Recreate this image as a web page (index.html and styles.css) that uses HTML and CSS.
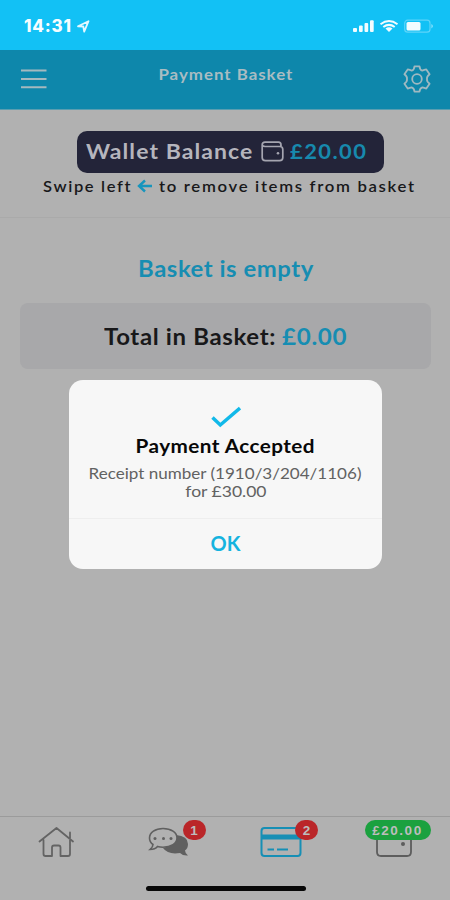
FILE: index.html
```html
<!DOCTYPE html>
<html lang="en">
<head>
<meta charset="utf-8">
<title>Payment Basket</title>
<link rel="stylesheet" href="styles.css">
</head>
<body>
<div class="app">
  <div class="status">
    <span class="time">14:31</span>
    <svg class="loc" width="13" height="13" viewBox="0 0 13 13"><path d="M1 6.3 11.5 1.2 7.2 11.6 6.3 6.5Z" fill="none" stroke="#e4f8ff" stroke-width="1.8" stroke-linejoin="round"/></svg>
    <svg class="signals" width="82" height="16" viewBox="0 0 82 16">
      <g fill="#f2fcff">
        <rect x="0" y="9" width="4" height="4" rx="1"/><rect x="6" y="6.5" width="3.7" height="6.5" rx="1"/><rect x="11.500" y="4" width="3.700" height="9" rx="1"/><rect x="17" y="1.200" width="3.700" height="11.800" rx="1"/>
        <path d="M32.500 9.500 Q36 7.200 39.500 9.500 L36 13Z"/>
        <rect x="53.500" y="3" width="14" height="8.500" rx="1.500"/>
      </g>
      <g fill="none" stroke="#f2fcff" stroke-width="2"><path d="M27.500 5.200Q36-1 44.500 5.200"/><path d="M30.300 8Q36 3.700 41.700 8"/></g>
      <rect x="51.700" y="1.200" width="25.300" height="12" rx="3" fill="none" stroke="#5dd4f9" stroke-width="1.200"/>
      <path d="M78.500 5Q81 7 78.500 9.500Z" fill="#a5e7fc"/>
    </svg>
  </div>
  <header class="header">
    <svg class="menu" width="26" height="22" viewBox="0 0 26 22"><path d="M0 2.500H25.500M0 11H25.500M0 19.200H25.500" stroke="#a5b9bf" stroke-width="2"/></svg>
    <h1><span class="fit title">Payment Basket</span></h1>
    <svg class="gear" width="30" height="30" viewBox="0 0 30 30" fill="none" stroke="#9fb9c1" stroke-width="1.800" stroke-linejoin="round"><path d="M12.500 2.300H17.500Q17.800 5.800 20.300 6.600Q22.200 6 24.300 5.400L27.600 10.200Q24.500 12.500 25 15Q24.500 17.500 27.600 19.800L24.300 24.600Q22.200 24 20.300 23.400Q17.800 24.200 17.500 27.700H12.500Q12.200 24.200 9.700 23.400Q7.800 24 5.700 24.600L2.400 19.800Q5.500 17.500 5 15Q5.500 12.500 2.400 10.200L5.700 5.400Q7.800 6 9.700 6.600Q12.200 5.800 12.500 2.300Z"/><circle cx="15" cy="15" r="4.800"/></svg>
  </header>
  <section class="wallet">
    <div class="pill">
      <span class="fit balance">Wallet Balance</span>
      <svg width="23" height="21" viewBox="0 0 23 21" fill="none" stroke="#a5a5b0" stroke-width="1.700"><path d="M1.200 4V16.500Q1.200 19.700 4.400 19.700H18.600Q21.800 19.700 21.800 16.500V8.500Q21.800 5.700 19 5.500H4Q1.200 5 1.200 3.700Q1.200 1.200 4 1.200H17.500Q20 1.200 20 4V5.500"/><circle cx="17" cy="12.300" r="1.300" fill="#a5a5b0" stroke="none"/></svg>
      <span class="fit amount">£20.00</span>
    </div>
    <p class="swipe"><span class="fit swipe-a">Swipe left</span><svg width="16" height="14" viewBox="0 0 16 14"><path d="M8 1.500 2 7 8 12.500M2 7H15" fill="none" stroke="#1795bd" stroke-width="2.400"/></svg><span class="fit swipe-b">to remove items from basket</span></p>
  </section>
  <main class="basket">
    <h2><span class="fit empty">Basket is empty</span></h2>
    <div class="total"><span class="fit total-label">Total in Basket:</span><span class="fit total-value">£0.00</span></div>
  </main>
  <nav class="tabs">
    <div class="tab"><svg width="38" height="34" viewBox="0 0 38 34" fill="none" stroke="#646464" stroke-width="1.800" stroke-linejoin="round" stroke-linecap="round"><path d="M2.500 16.500 19.500 3 36 16.500M33 13V7.500M6.500 15V29Q6.500 31 8.500 31H15V22.500Q15 20.500 17 20.500H21.500Q23.500 20.500 23.500 22.500V31H31Q33 31 33 29V15"/></svg></div>
    <div class="tab"><svg width="42" height="34" viewBox="0 0 42 34"><path d="M28 10Q40 11 40 19Q40 23.500 37 25.500Q37 28 40 30.500Q35 31 32 28Q20 30 15 23Q27 21 28 10Z" fill="#606060"/><path d="M15 3.500C7.500 3.500 1.500 7.500 1.500 13Q1.500 17 5 19.500Q5 22 2 24.500Q7 24.500 9.500 21.500Q12 22.200 15 22.200C23 22.200 29 18.500 29 13S23 3.500 15 3.500Z" fill="#b1b1b1" stroke="#606060" stroke-width="1.600"/><g fill="#606060"><circle cx="7" cy="13.500" r="1.500"/><circle cx="15.500" cy="13.500" r="1.500"/><circle cx="23" cy="13.500" r="1.500"/></g></svg><span class="badge red">1</span></div>
    <div class="tab"><svg width="42" height="34" viewBox="0 0 42 34"><rect x="1.500" y="3" width="39" height="28" rx="3" fill="none" stroke="#168fb5" stroke-width="2"/><path d="M1.500 12H40.500" stroke="#168fb5" stroke-width="5"/><path d="M7.500 24.500H14M17 24.500H28" stroke="#168fb5" stroke-width="2"/></svg><span class="badge red">2</span></div>
    <div class="tab"><svg width="38" height="34" viewBox="0 0 38 34"><path d="M2 6V27Q2 31 6 31H32Q36 31 36 27V6" fill="none" stroke="#5d5d5d" stroke-width="1.800"/><circle cx="28" cy="19" r="2" fill="#5d5d5d"/></svg><span class="badge green">£20.00</span></div>
  </nav>
  <div class="home-area"><div class="home-bar"></div></div>
  <div class="dialog">
    <div class="message">
      <svg width="30" height="22" viewBox="0 0 30 22"><path d="M1.500 11.500 9.300 19 29 2" fill="none" stroke="#12b9e9" stroke-width="3.500"/></svg>
      <h3><span class="fit accepted">Payment Accepted</span></h3>
      <p><span class="fit receipt">Receipt number (1910/3/204/1106)</span></p>
      <p><span class="fit price">for £30.00</span></p>
    </div>
    <div class="ok">OK</div>
  </div>
</div>
</body>
</html>
```
FILE: styles.css
```css
* { box-sizing: border-box; }
body { margin: 0; background: #b1b1b1; font-family: Lato, "Open Sans", sans-serif; color: #18181a; }
h1, h2, h3, p { margin: 0; font: inherit; }
svg { display: block; flex: none; }
.fit { display: inline-block; white-space: nowrap; }
.app { position: relative; width: 450px; height: 900px; display: flex; flex-direction: column; overflow: hidden; }
.status { height: 50px; flex: none; background: #12c1f5; display: flex; align-items: flex-start; padding: 16px 15px 0 24px; }
.time { font: 800 17px/20px Inter, sans-serif; color: #f5fdff; width: 49px; letter-spacing: .8px; }
.loc { margin: 4px 0 0 4px; }
.signals { margin: 3px 0 0 auto; }
.header { height: 60px; flex: none; background: #0e87ab; border-bottom: 1px solid #599eb1; display: flex; align-items: flex-start; justify-content: space-between; padding: 14px 18px 0 21px; }
.menu { margin-top: 4px; }
.header h1 { line-height: 20px; font-size: 15.500px; font-weight: 700; color: #a9bcc2; letter-spacing: .9px; }
.title { transform: translateX(1px) scaleX(1.09); }
.wallet { height: 108px; flex: none; border-bottom: 1px solid #aaa; display: flex; flex-direction: column; align-items: center; padding: 21px 0 0 10px; }
.pill { width: 307px; height: 42px; background: #232439; border-radius: 10px; display: flex; align-items: center; padding: 0 9px 2px; gap: 7px; color: #b5b5bd; font-size: 21.500px; font-weight: 700; }
.pill .fit { margin-top: -1px; }
.balance { letter-spacing: 1px; width: 168px; transform: scaleX(1.07); transform-origin: left; }
.amount { color: #1789ad; letter-spacing: 1.4px; margin-left: -1px; transform: scaleX(1.02); transform-origin: left; }
.swipe { display: flex; align-items: center; height: 26px; font-size: 15.500px; font-weight: 600; letter-spacing: 1.55px; }
.swipe-a { width: 94px; transform: scaleX(1.065); transform-origin: left; }
.swipe-b { width: 258px; margin-left: 6px; transform: scaleX(1.08); transform-origin: left; }
.basket { flex: 1; padding: 39px 19px 0 20px; }
.basket h2 { height: 46px; line-height: 24px; text-align: center; color: #168db2; font-size: 22px; font-weight: 700; letter-spacing: .5px; }
.empty { transform: scaleX(1.085); }
.total { height: 66px; border-radius: 8px; background: #a8a8aa; display: flex; align-items: center; justify-content: center; gap: 7px; font-size: 22px; font-weight: 700; letter-spacing: .6px; }
.total-label { width: 171px; transform: scaleX(1.09); transform-origin: left; }
.total-value { width: 65px; color: #168db2; transform: scaleX(1.1); transform-origin: left; }
.tabs { height: 58px; flex: none; border-top: 1px solid #9b9b9b; display: grid; grid-template-columns: repeat(4, 112.5px); padding-top: 8px; }
.tab { position: relative; display: flex; justify-content: center; }
.badge { position: absolute; left: 70px; top: -5px; height: 20px; border-radius: 10px; font: 700 13.500px/22px "Liberation Sans", sans-serif; text-align: center; color: #bdbdbd; width: 23px; background: #ba2629; }
.green { left: 27px; width: 66px; background: #1ba13f; letter-spacing: 1.5px; }
.home-area { height: 26px; flex: none; padding: 12px 0 0 146px; }
.home-bar { width: 160px; height: 5px; border-radius: 3px; background: #080808; }
.dialog { position: absolute; left: 69px; top: 380px; width: 313px; height: 189px; border-radius: 14px; background: #f7f7f7; text-align: center; }
.message { height: 139px; padding-top: 26px; border-bottom: 1px solid #eee; display: flex; flex-direction: column; align-items: center; }
.message h3 { font-size: 19px; line-height: 24px; margin: 6px 0 6px; font-weight: 700; color: #080808; letter-spacing: .4px; }
.accepted { transform: scaleX(1.09); }
.message p { font-size: 15.500px; line-height: 18px; color: #626262; }
.receipt { transform: scaleX(1.1); }
.price { transform: scaleX(1.13); }
.ok { font-size: 20px; line-height: 49px; font-weight: 700; color: #15b3df; }
```
